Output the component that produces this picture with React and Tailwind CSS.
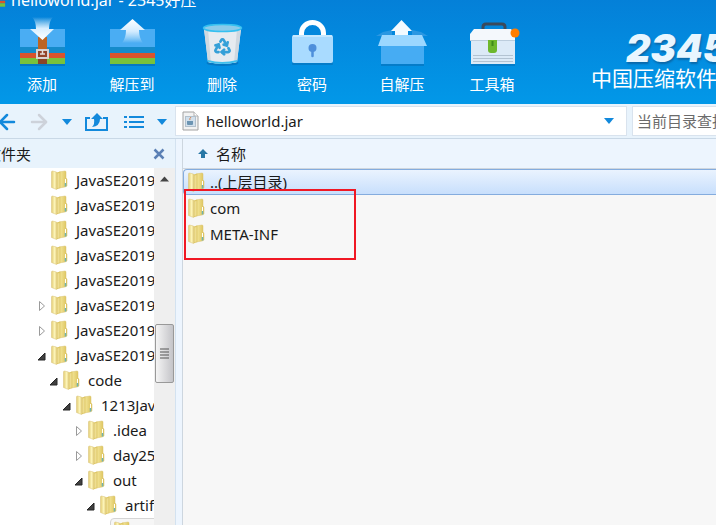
import React, { useState } from 'react';
import { ArrowLeft, ArrowRight, Recycle } from 'lucide-react';

const AddIcon = () => (
  <svg viewBox="0 0 48 48" className="h-12 w-12 overflow-visible" aria-hidden="true">
    <defs>
      <linearGradient id="addArrow" x1="0" y1="0" x2="0" y2="1">
        <stop offset="0" stopColor="#fff" stopOpacity="0" />
        <stop offset="0.5" stopColor="#d8efff" />
        <stop offset="1" stopColor="#fff" />
      </linearGradient>
    </defs>
    <rect x="2" y="47" width="45" height="2" fill="#0669b0" opacity="0.6" />
    <rect x="2" y="12" width="45" height="18" fill="#4aadf3" />
    <rect x="2" y="30" width="45" height="6" fill="#158bca" />
    <rect x="2" y="36" width="45" height="5" fill="#d9532c" />
    <rect x="2" y="41" width="45" height="6" fill="#78c23c" />
    <rect x="20" y="20" width="9" height="13" fill="#bd6522" />
    <rect x="20" y="40" width="9" height="7" fill="#8b4426" />
    <rect x="19" y="33" width="11" height="8" fill="#94452a" stroke="#d9d3d0" strokeWidth="2" />
    <path d="M24.500 33v4M22 37h5" stroke="#e6e0dc" strokeWidth="1.500" />
    <path d="M14 0h21q-4 4-4 12h5L24.500 23 12 12h6q0-8-4-12z" fill="url(#addArrow)" />
  </svg>
);

const ExtractIcon = () => (
  <svg viewBox="0 0 48 48" className="h-12 w-12 overflow-visible" aria-hidden="true">
    <defs>
      <linearGradient id="extractArrow" x1="0" y1="0" x2="0" y2="1">
        <stop offset="0" stopColor="#fff" />
        <stop offset="0.5" stopColor="#d5edff" />
        <stop offset="1" stopColor="#fff" stopOpacity="0" />
      </linearGradient>
    </defs>
    <rect x="2" y="47" width="45" height="2" fill="#0669b0" opacity="0.6" />
    <rect x="2" y="12" width="45" height="18" fill="#4aadf3" />
    <rect x="2" y="30" width="45" height="6" fill="#158bca" />
    <rect x="2" y="36" width="45" height="5" fill="#d9532c" />
    <rect x="2" y="41" width="45" height="6" fill="#78c23c" />
    <path d="M24.500 2 37 13h-6q0 8 4 13H14q4-5 4-13h-6z" fill="url(#extractArrow)" />
  </svg>
);

const DeleteIcon = () => (
  <svg viewBox="0 0 48 48" className="h-12 w-12 overflow-visible" aria-hidden="true">
    <ellipse cx="24.500" cy="46" rx="16" ry="3" fill="#0669b0" opacity="0.6" />
    <path d="M6 12h37l-4 33q-14 4-29 0z" fill="#e6ebf0" />
    <path d="M6 12h4l3 34-3-1zM43 12h-4l-3 34 3-1z" fill="#cfd8e0" />
    <path d="M10 43q14 4 29 0v2q-14 4-29 0z" fill="#3fc0ee" />
    <ellipse cx="24.500" cy="11" rx="19" ry="3.500" fill="#8ccbea" stroke="#35c0f0" strokeWidth="1.500" />
    <Recycle x="15" y="20" width="19" height="19" color="#35a0d8" strokeWidth={3.4} />
  </svg>
);

const LockIcon = () => (
  <svg viewBox="0 0 48 48" className="h-12 w-12 overflow-visible" aria-hidden="true">
    <rect x="4" y="45" width="41" height="3" rx="1" fill="#0669b0" opacity="0.5" />
    <path d="M13.500 20v-4a11 10.500 0 0 1 22 0v4" fill="none" stroke="#fff" strokeWidth="5" />
    <rect x="4" y="18" width="41" height="28" rx="2" fill="#a9dbff" />
    <path d="M5 19h39" stroke="#d0ecff" strokeWidth="1.500" />
    <circle cx="24.500" cy="31" r="4" fill="#4e8fdb" />
    <path d="M24.500 31v8" stroke="#4e8fdb" strokeWidth="2.500" strokeLinecap="round" />
  </svg>
);

const SfxIcon = () => (
  <svg viewBox="0 0 48 48" className="h-12 w-12 overflow-visible" aria-hidden="true">
    <path d="M5 15 14 13v6H-2zM43 15l-9-2v6h16z" fill="#2b97e2" />
    <rect x="3" y="46" width="43" height="3" fill="#0669b0" opacity="0.5" />
    <path d="M23.500 3 34 14h-4v5H17v-5h-4z" fill="#f3faff" />
    <rect x="3" y="28" width="43" height="19" fill="#46acf3" />
    <path d="M4 18h40l5 11H0z" fill="#9bd7ff" />
  </svg>
);

const ToolboxIcon = () => (
  <svg viewBox="0 0 48 48" className="h-12 w-12 overflow-visible" aria-hidden="true">
    <rect x="3" y="46" width="44" height="3" fill="#0669b0" opacity="0.5" />
    <path d="M15 13v-3q0-3 3-3h16q3 0 3 3v3" fill="none" stroke="#3b4a5c" strokeWidth="3" />
    <rect x="3" y="22" width="44" height="25" fill="#dceaf7" />
    <path d="M6 12h37l4 5v6H2v-6z" fill="#f4f8fc" />
    <path d="M2 23.500h45" stroke="#bccddd" />
    <path d="M5 38.500h40M5 41.500h40M5 44.500h40" stroke="#b3c3d2" />
    <path d="M20 23h9v10q0 3-3 3h-3q-3 0-3-3z" fill="#6db82c" />
    <path d="M24.500 24v5" stroke="#3f8a18" strokeWidth="2" />
    <circle cx="47" cy="16" r="4.500" fill="#ff7e00" />
  </svg>
);

const FolderIcon = () => (
  <svg viewBox="0 0 17 20" className="h-5 w-[17px] shrink-0" aria-hidden="true">
    <defs>
      <linearGradient id="folderFront" x1="0" y1="0" x2="1" y2="0">
        <stop offset="0" stopColor="#e3cc72" />
        <stop offset="0.6" stopColor="#fbf3b8" />
        <stop offset="1" stopColor="#ecd988" />
      </linearGradient>
      <linearGradient id="folderBack" x1="0" y1="0" x2="1" y2="0">
        <stop offset="0" stopColor="#f6eaa0" />
        <stop offset="1" stopColor="#dcc25a" />
      </linearGradient>
    </defs>
    <path d="M8 2l6-1q1 0 1 1v6l1 1v7l-2 1-6 1z" fill="url(#folderBack)" stroke="#d8c06c" strokeWidth="0.500" />
    <path d="M0.500 2q0-1 1-1l4 1v17.500l-5-2z" fill="url(#folderFront)" stroke="#d9c278" strokeWidth="0.500" />
    <path d="M5.500 2.500l4-1v16.500l-4 1.500z" fill="#dfc868" />
    <path d="M6.500 3.500l2-.5v14.500l-2 .5z" fill="#eedd92" />
    <path d="M14.500 9v4" stroke="#fff" />
    <path d="M14.500 13v3.500" stroke="#6fb3b0" strokeWidth="1.500" />
  </svg>
);

const JarIcon = () => (
  <svg viewBox="0 0 17 20" className="h-5 w-[17px] shrink-0" aria-hidden="true">
    <path d="M1 1h11l4 4v14H1z" fill="#f2f2f2" stroke="#a2a2a2" />
    <path d="M12 1v4h4" fill="#fff" stroke="#b2b2b2" />
    <rect x="3.500" y="5.500" width="10" height="10" fill="#d2e0ec" stroke="#b2c0cc" />
    <path d="M5 10h6v3q0 1-1 1H6q-1 0-1-1z" fill="#6c94b2" />
    <path d="M8 9q-1-1 1-3" stroke="#d48352" fill="none" />
  </svg>
);

const Caret = () => (
  <svg viewBox="0 0 10 6" className="h-[6px] w-[10px]" aria-hidden="true">
    <path d="M0 0h10L5 6z" fill="#1289dc" />
  </svg>
);

const ShareUpIcon = () => (
  <svg viewBox="0 0 23 18" className="h-[18px] w-[23px]" aria-hidden="true">
    <path d="M5 5H1v12h21V5h-4" fill="none" stroke="#1289dc" strokeWidth="2" />
    <path d="M12 0l6 6h-3q0 7-8 8 3-3 2-8H6z" fill="#1289dc" />
  </svg>
);

const ListIcon = () => (
  <svg viewBox="0 0 20 14" className="h-[14px] w-5" aria-hidden="true">
    <path d="M0 2h3M5 2h15M0 7h3M5 7h15M0 12h3M5 12h15" stroke="#1289dc" strokeWidth="2" />
  </svg>
);

const tools = [
  { label: '添加', Icon: AddIcon },
  { label: '解压到', Icon: ExtractIcon },
  { label: '删除', Icon: DeleteIcon },
  { label: '密码', Icon: LockIcon },
  { label: '自解压', Icon: SfxIcon },
  { label: '工具箱', Icon: ToolboxIcon },
];

const tree = [
  { name: 'JavaSE2019', indent: 'pl-[36px]' },
  { name: 'JavaSE2019', indent: 'pl-[36px]' },
  { name: 'JavaSE2019', indent: 'pl-[36px]' },
  { name: 'JavaSE2019', indent: 'pl-[36px]' },
  { name: 'JavaSE2019', indent: 'pl-[36px]' },
  { name: 'JavaSE2019', indent: 'pl-[36px]', state: 'closed' },
  { name: 'JavaSE2019', indent: 'pl-[36px]', state: 'closed' },
  { name: 'JavaSE2019', indent: 'pl-[36px]', state: 'open' },
  { name: 'code', indent: 'pl-[48px]', state: 'open' },
  { name: '1213JavaSE', indent: 'pl-[61px]', state: 'open' },
  { name: '.idea', indent: 'pl-[73px]', state: 'closed' },
  { name: 'day25', indent: 'pl-[73px]', state: 'closed' },
  { name: 'out', indent: 'pl-[73px]', state: 'open' },
  { name: 'artifacts', indent: 'pl-[85px]', state: 'open' },
  { name: 'helloworld_jar', indent: 'pl-[98px]', selected: true },
];

const files = ['..(上层目录)', 'com', 'META-INF'];

const Expander = ({ state }) => (
  <svg viewBox="0 0 12 12" className="h-3 w-3 shrink-0" aria-hidden="true">
    {state === 'closed' && <path d="M3.500 1.500v9l5-4.500z" fill="#fff" stroke="#9a9a9a" />}
    {state === 'open' && <path d="M9 3v7H2z" fill="#404040" stroke="#262626" />}
  </svg>
);

const TreeItem = ({ item }) => (
  <li className={`flex h-[25px] items-center ${item.indent}`}>
    <Expander state={item.state} />
    <span
      className={`flex h-[25px] items-center gap-2 whitespace-nowrap pl-[3px] ${
        item.selected ? 'rounded-sm border border-[#d5d5d5] bg-[#f6f6f6]' : 'pb-[2px]'
      }`}
    >
      <FolderIcon />
      {item.name}
    </span>
  </li>
);

const Header = () => (
  <header className="flex h-[104px] shrink-0 overflow-hidden bg-linear-to-b from-[#0480d8] to-[#0298e8] text-white">
    <div className="flex flex-col">
      <div className="flex h-[10px] items-end gap-[5px] overflow-hidden">
        <svg viewBox="0 0 7 10" className="h-[10px] w-[6px] shrink-0" aria-hidden="true">
          <path d="M0 0h6v3H0z" fill="#d9532c" />
          <path d="M0 3h6v4H0z" fill="#78c23c" />
        </svg>
        <h1 className="whitespace-nowrap text-[16px] leading-5">helloworld.jar - 2345好压</h1>
      </div>
      <nav className="-ml-[3px] flex pt-[7px]">
        {tools.map(({ label, Icon }) => (
          <button key={label} type="button" className="flex w-[90px] shrink-0 flex-col items-center gap-[9px]">
            <Icon />
            <span className="text-[15px] leading-5">{label}</span>
          </button>
        ))}
      </nav>
    </div>
    <div className="ml-auto w-[125px] shrink-0 overflow-hidden whitespace-nowrap pt-[28px]">
      <p className="pl-[35px] font-['Inter','DejaVu_Sans',sans-serif] text-[38px] font-black italic leading-10 text-[#e8f6ff] [text-shadow:1px_2px_2px_#0b68a8]">
        2345
      </p>
      <p className="text-[21px] leading-5">中国压缩软件</p>
    </div>
  </header>
);

const AddressBar = () => {
  const [path, setPath] = useState('helloworld.jar');

  return (
    <div className="flex h-[35px] shrink-0 items-center border-b border-[#c9d8e6] bg-[#e8f3fc]">
      <div className="flex w-[175px] shrink-0 items-center pt-[2px] text-[#1289dc]">
        <button type="button" aria-label="后退" className="-ml-[5px]">
          <ArrowLeft size={24} strokeWidth={2.5} />
        </button>
        <button type="button" aria-label="前进" className="ml-2 text-[#cdd2da]">
          <ArrowRight size={24} strokeWidth={2.5} />
        </button>
        <button type="button" aria-label="历史记录" className="ml-[11px]">
          <Caret />
        </button>
        <button type="button" aria-label="向上" className="ml-[13px]">
          <ShareUpIcon />
        </button>
        <button type="button" aria-label="查看" className="ml-4">
          <ListIcon />
        </button>
        <button type="button" aria-label="查看方式" className="ml-[13px]">
          <Caret />
        </button>
      </div>
      <div className="flex h-[30px] min-w-0 flex-1 items-center gap-[7px] border border-[#d9e3ee] bg-white pl-[6px] pr-3">
        <JarIcon />
        <input
          aria-label="路径"
          value={path}
          onChange={(e) => setPath(e.target.value)}
          className="min-w-0 flex-1 bg-transparent outline-none"
        />
        <button type="button" aria-label="展开路径">
          <Caret />
        </button>
      </div>
      <input
        type="text"
        aria-label="当前目录查找"
        placeholder="当前目录查找"
        className="ml-[5px] h-[30px] w-[84px] shrink-0 border border-r-0 border-[#d9e3ee] bg-white pl-1 outline-none placeholder:text-[#6b6b6b]"
      />
    </div>
  );
};

const Sidebar = () => (
  <aside className="flex w-[175px] shrink-0 flex-col">
    <div className="flex h-[29px] shrink-0 items-center justify-between overflow-hidden bg-[#e8f3fc] pr-[10px]">
      <h2 className="-ml-[14px]">文件夹</h2>
      <button type="button" aria-label="关闭">
        <svg viewBox="0 0 12 12" className="h-3 w-3" aria-hidden="true">
          <path d="M1.500 1.500l9 9M10.500 1.500l-9 9" stroke="#5b80b5" strokeWidth="2.500" />
        </svg>
      </button>
    </div>
    <div className="flex min-h-0 flex-1 bg-white">
      <ul className="min-w-0 flex-1 overflow-hidden">
        {tree.map((item, i) => (
          <TreeItem key={i} item={item} />
        ))}
      </ul>
      <div className="flex w-[21px] shrink-0 flex-col items-start bg-[#efefef]">
        <svg viewBox="0 0 20 22" className="h-[22px] w-5" aria-hidden="true">
          <path d="M6 13.500h9l-4.500-5z" fill="#444" />
        </svg>
        <div className="ml-px mt-[134px] flex h-[59px] w-[19px] justify-center rounded-xs border border-[#999] bg-linear-to-r from-[#f5f5f5] to-[#c4c4c8] pt-[23px]">
          <svg viewBox="0 0 9 11" className="h-[11px] w-[9px]" aria-hidden="true">
            <path d="M0 1h9M0 4h9M0 7h9M0 10h9" stroke="#555" />
          </svg>
        </div>
      </div>
    </div>
  </aside>
);

const FileList = () => (
  <main className="relative min-w-0 flex-1 overflow-hidden border-l border-[#cdd6df] bg-[#f7f7f7]">
    <table className="w-full border-separate border-spacing-0 text-left">
      <thead>
        <tr>
          <th className="h-[30px] border-b border-[#cfd6de] bg-[#edf5fe] p-0 pl-[15px] font-normal">
            <span className="flex items-center gap-2">
              <svg viewBox="0 0 10 10" className="h-[10px] w-[10px]" aria-hidden="true">
                <path d="M5 0l5 5H7v4H3V5H0z" fill="#2877a5" />
              </svg>
              名称
            </span>
          </th>
        </tr>
      </thead>
      <tbody>
        {files.map((name, i) => (
          <tr key={name}>
            <td
              className={`h-[26px] border p-0 pl-1 ${
                i === 0
                  ? 'rounded-l-sm border-r-0 border-[#84acde] bg-linear-to-b from-[#eaf3fe] to-[#c8dffc]'
                  : 'border-transparent'
              }`}
            >
              <span className="flex items-center gap-[5px]">
                <FolderIcon />
                {name}
              </span>
            </td>
          </tr>
        ))}
      </tbody>
    </table>
    <div className="pointer-events-none absolute left-px top-[50px] h-[71px] w-[172px] border-2 border-[#f01824]" />
  </main>
);

export default function App() {
  return (
    <div className="flex h-screen flex-col overflow-hidden bg-[#e8f3fc] font-['Noto_Sans','Noto_Sans_CJK_SC',sans-serif] text-[15px] leading-5 text-[#1a1a1a]">
      <Header />
      <AddressBar />
      <div className="flex min-h-0 flex-1">
        <Sidebar />
        <div className="w-[7px] shrink-0 border-l border-[#d3e2f0] bg-[#edf5fe]" />
        <FileList />
      </div>
    </div>
  );
}
